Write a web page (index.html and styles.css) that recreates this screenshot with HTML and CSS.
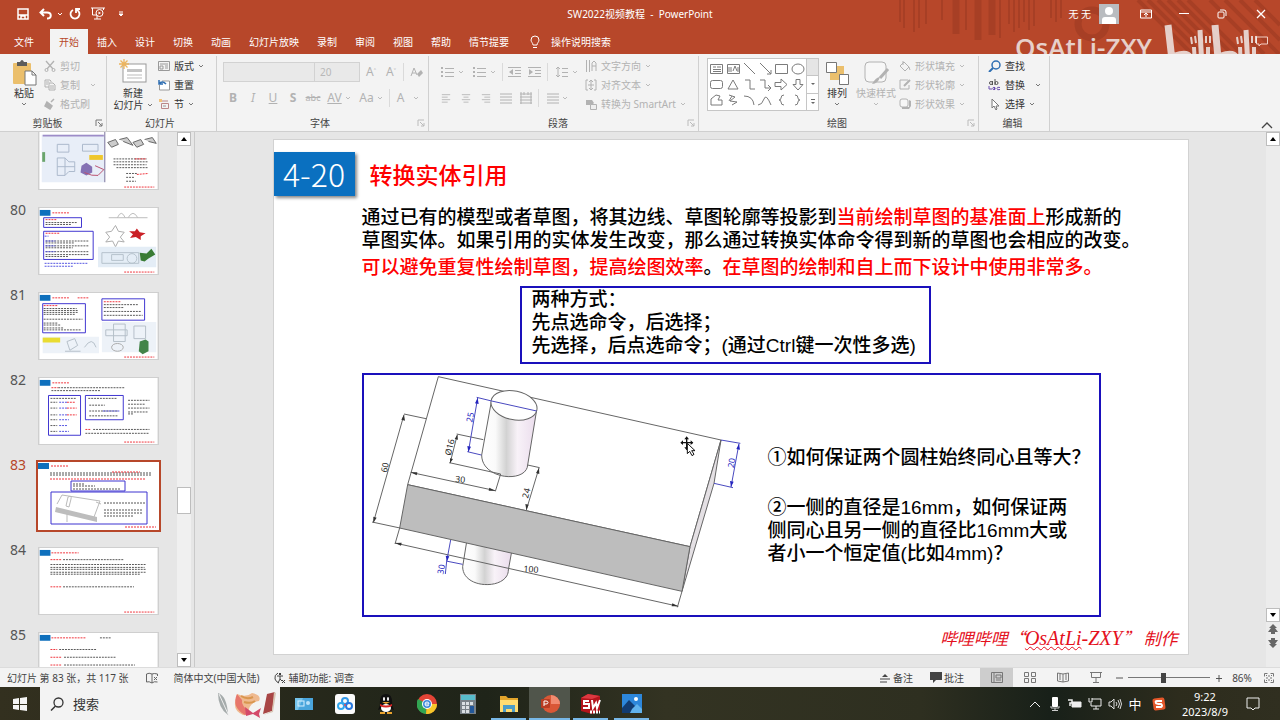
FILE: index.html
```html
<!DOCTYPE html>
<html lang="zh-CN">
<head>
<meta charset="utf-8">
<title>SW2022视频教程 - PowerPoint</title>
<link rel="stylesheet" href="styles.css">
</head>
<body>
<svg class="sprite" aria-hidden="true">
  <symbol id="chev" viewBox="0 0 6 6"><path d="M1 2l2 2 2-2" fill="none" stroke="currentColor"/></symbol>
  <symbol id="launch" viewBox="0 0 8 8"><path d="M1 7V1h6M3 3l4 4M7 4v3H4" fill="none" stroke="currentColor"/></symbol>
  <symbol id="align" viewBox="0 0 12 12"><path d="M1 2h10M1 5h7M1 8h10M1 11h7" stroke="currentColor" fill="none"/></symbol>
  <symbol id="alignc" viewBox="0 0 12 12"><path d="M1 2h10M3 5h6M1 8h10M3 11h6" stroke="currentColor" fill="none"/></symbol>
  <symbol id="alignr" viewBox="0 0 12 12"><path d="M1 2h10M4 5h7M1 8h10M4 11h7" stroke="currentColor" fill="none"/></symbol>
  <symbol id="alignj" viewBox="0 0 12 12"><path d="M0 2h12M0 5h12M0 8h12M0 11h12" stroke="currentColor" fill="none"/></symbol>
  <symbol id="list" viewBox="0 0 14 12"><path d="M0 2h2M0 6h2M0 10h2" stroke="currentColor" stroke-width="2"/><path d="M4 2.500h9M4 6.500h9M4 10.500h9" stroke="currentColor"/></symbol>
  <symbol id="indent" viewBox="0 0 14 12"><path d="M0 1.500h13M7 4.500h6M7 7.500h6M0 10.500h13" stroke="currentColor"/><path d="M5 3v6L1 6z" fill="currentColor"/></symbol>
</svg>

<header class="top">
  <svg class="pattern" viewBox="0 0 400 54" aria-hidden="true">
    <g stroke="#9f3c23" opacity=".65">
      <path d="M20 0v22M24 0v28M34 0v32M39 0v28M46 0v24" stroke-width="2"/>
      <path d="M76 0v34M98 0v40M112 0v35" stroke-width="7"/>
      <path d="M62 0v20M86 0v30M120 0v38M129 0v24M134 0v32M139 0v28M144 0v22M149 0v30M154 0v26M171 0v18M176 0v22M181 0v18" stroke-width="2"/>
      <path d="M258 0l54 54M268 0l54 54M278 0l54 54M288 0l54 54M298 0l54 54M308 0l54 54M330 0l54 54M345 0l54 54M360 0l40 40M375 0l25 25" stroke-width="4"/>
      <circle cx="212" cy="24" r="14" fill="none" stroke-width="7"/>
    </g>
  </svg>
  <div class="titlebar">
    <div class="quick">
      <button aria-label="保存"><svg width="12" height="12" viewBox="0 0 12 12"><path d="M1 1h10v10H1zM1 7h10M4 11V8h4v3" fill="none" stroke="#fff" stroke-width="1.500"/></svg></button>
      <button aria-label="撤消"><svg width="14" height="12" viewBox="0 0 14 12"><path d="M2 4.500h6c5 0 5 6 0 6M5 1L1.500 4.500 5 8" fill="none" stroke="#fff" stroke-width="2"/></svg></button>
      <svg class="chev" width="6" height="6"><use href="#chev"/></svg>
      <button aria-label="重做"><svg width="12" height="12" viewBox="0 0 12 12"><path d="M4 2a4.500 4.500 0 1 0 4 0M7 5V1h4" fill="none" stroke="#fff" stroke-width="1.800"/></svg></button>
      <button aria-label="从头开始"><svg width="14" height="13" viewBox="0 0 14 13"><path d="M0 1h14M1.500 1v7h4M12.500 1v2M6 8v4M3 12h7" fill="none" stroke="#fff"/><circle cx="8.500" cy="6" r="3.500" fill="none" stroke="#fff"/><path d="M7.500 4.500v3l2.500-1.500z" fill="#fff"/></svg></button>
      <button aria-label="自定义快速访问工具栏"><svg width="8" height="8" viewBox="0 0 8 8"><path d="M2 2h4M2 4h4L4 6z" stroke="#fff" fill="#fff"/></svg></button>
    </div>
    <h1 class="wintitle">SW2022视频教程 &nbsp;- &nbsp;PowerPoint</h1>
    <div class="account">
      <span>无 无</span>
      <svg width="20" height="20" viewBox="0 0 20 20"><path d="M0 0h20v20H0z" fill="#b9bcc0"/><circle cx="10" cy="7" r="4" fill="#fff"/><path d="M3 20v-4q0-3 3-3h8q3 0 3 3v4z" fill="#fff"/></svg>
      <button aria-label="功能区显示选项"><svg width="12" height="10" viewBox="0 0 12 10"><path d="M.5 1h11v8H.5zM.5 3h11M6 8V4M4 6l2-2 2 2" fill="none" stroke="#fff"/></svg></button>
      <button aria-label="最小化"><svg width="10" height="10" viewBox="0 0 10 10"><path d="M0 4.500h10" stroke="#fff"/></svg></button>
      <button aria-label="还原"><svg width="10" height="10" viewBox="0 0 10 10"><rect x="1" y="3" width="6" height="6" rx="1" fill="none" stroke="#fff"/><path d="M3 1h4q2 0 2 2v4" fill="none" stroke="#fff"/></svg></button>
      <button aria-label="关闭"><svg width="10" height="10" viewBox="0 0 10 10"><path d="M1 1l8 8M9 1L1 9" stroke="#fff" stroke-width="1.300"/></svg></button>
    </div>
  </div>
  <nav class="tabs">
    <button class="file">文件</button><button class="on">开始</button><button>插入</button><button>设计</button><button>切换</button><button>动画</button><button>幻灯片放映</button><button>录制</button><button>审阅</button><button>视图</button><button>帮助</button><button>情节提要</button>
    <button class="tell"><svg width="10" height="14" viewBox="0 0 10 14"><path d="M3 10C3 8 1 7 1 5a4 4 0 0 1 8 0c0 2-2 3-2 5zM3 12.500h4" fill="none" stroke="#fff"/></svg>操作说明搜索</button>
    <button class="remark" aria-label="批注"><svg width="12" height="11" viewBox="0 0 12 11"><path d="M.5 1h11v7H5L3 10V8H.5z" fill="none" stroke="#f3cfc4"/></svg></button>
  </nav>
  <div class="watermark">
    <span>OsAtLi-ZXY</span>
    <svg width="94" height="50" viewBox="0 0 94 50" fill="none" stroke="#f3f3f3" stroke-width="7"><path d="M4 1l5 44M11 32q18-6 14 8M51 1l4 44M57 32q18-6 14 8"/><path d="M36 6l2 38M82 6l2 38" stroke-width="5"/><path d="M27 13l1 7M31 12l1 7M42 12v7M46 12v7M73 13l1 7M77 12l1 7M88 12v7M92 12v7" stroke-width="2"/><path d="M30 23l1 20M44 23v20M76 23l1 20M90 23v20" stroke-width="4"/></svg>
  </div>
</header>

<section class="ribbon" aria-label="功能区">
  <div class="group g-clip">
    <div class="body">
      <button class="big"><svg width="26" height="27" viewBox="0 0 26 27"><rect x="2" y="4" width="18" height="21" rx="1" fill="#ebbf6c"/><path d="M6 3h3q2-4 4 0h3v4H6z" fill="#5c5c5c"/><path d="M14 12h7l4 4v10H14z" fill="#fff" stroke="#777"/><path d="M21 12v4h4" fill="none" stroke="#777"/></svg><span>粘贴</span><svg class="chev" width="6" height="6"><use href="#chev"/></svg></button>
      <div class="stack off">
        <button disabled><svg width="12" height="12" viewBox="0 0 12 12"><path d="M2 1l7 8M10 1L3 9" stroke="currentColor" stroke-width="1.300"/><circle cx="2.500" cy="10" r="1.500" fill="none" stroke="currentColor"/><circle cx="9.500" cy="10" r="1.500" fill="none" stroke="currentColor"/></svg>剪切</button>
        <button disabled><svg width="12" height="12" viewBox="0 0 12 12"><path d="M5 8H1V1h5l1 1v1M5 4h4l2 2v5H5zM6 7h4M6 9h4M2 3h3M2 5h2" fill="none" stroke="currentColor"/></svg>复制<svg class="chev far" width="6" height="6"><use href="#chev"/></svg></button>
        <button disabled><svg width="12" height="12" viewBox="0 0 12 12"><path d="M10 1L7 4M3 4l5 4-2 3-5-3z" fill="currentColor" stroke="currentColor" stroke-width="1.500"/></svg>格式刷</button>
      </div>
    </div>
    <div class="caption"><span>剪贴板</span><svg width="8" height="8"><use href="#launch"/></svg></div>
  </div>
  <div class="group g-slides">
    <div class="body">
      <button class="big"><svg width="28" height="27" viewBox="0 0 28 27"><rect x="4" y="5" width="23" height="18" fill="#fff" stroke="#999"/><path d="M8 10h15v3H8z" fill="#c4c4c4"/><path d="M8 16h15M8 19h15" stroke="#bbb"/><path d="M5 0v10M0 5h10M1.500 1.500l7 7M8.500 1.500l-7 7" stroke="#ecb560" stroke-width="1.300"/></svg><span>新建</span><span class="line">幻灯片<svg class="chev" width="6" height="6"><use href="#chev"/></svg></span></button>
      <div class="stack">
        <button><svg width="12" height="12" viewBox="0 0 12 12"><path d="M.5 1.500h11v9H.5zM2 4h8M2 6h3v3H2zM7 6h3M7 8h3" fill="none" stroke="#999"/></svg>版式<svg class="chev" width="6" height="6"><use href="#chev"/></svg></button>
        <button><svg width="12" height="12" viewBox="0 0 12 12"><path d="M4 2h7.500v9h-10V6" fill="#fff" stroke="#999"/><path d="M1 1v4h4M1 5q3-4 7 0" fill="none" stroke="#2f6fb3" stroke-width="1.500"/></svg>重置</button>
        <button><svg width="12" height="12" viewBox="0 0 12 12"><path d="M3 3h7M3.500 5.500h7v5h-7z" fill="none" stroke="#b88"/><path d="M1 1h3v3H1z" fill="#f1c27a"/><path d="M5 8h3" stroke="#999"/></svg>节<svg class="chev" width="6" height="6"><use href="#chev"/></svg></button>
      </div>
    </div>
    <div class="caption"><span>幻灯片</span></div>
  </div>
  <div class="group g-font off">
    <div class="rows">
      <div class="row">
        <select class="fam" aria-label="字体" disabled><option></option></select><select class="size" aria-label="字号" disabled><option>20</option></select>
        <button class="b20 glyph" disabled>A<sup>˄</sup></button><button class="b20 glyph" disabled>A<sup>˅</sup></button><i class="sep"></i>
        <button class="b20" disabled aria-label="清除格式"><svg width="13" height="13" viewBox="0 0 13 13"><path d="M1 10L4 2l3 7M2 7h4" fill="none" stroke="currentColor"/><path d="M7 8l4-4 2 3-4 4z" fill="currentColor"/></svg></button>
      </div>
      <div class="row">
        <button class="b20 glyph" disabled><b>B</b></button><button class="b20 glyph" disabled><em>I</em></button><button class="b20 glyph" disabled><u>U</u></button><button class="b20 glyph" disabled><b>S</b></button><button class="b20 mini" disabled><s>abc</s></button><button class="b32 glyph" disabled><u>AV</u><svg class="chev" width="6" height="6"><use href="#chev"/></svg></button><button class="b32 glyph" disabled>Aa<svg class="chev" width="6" height="6"><use href="#chev"/></svg></button><i class="sep"></i><button class="b32 glyph" disabled>A<svg class="chev far" width="6" height="6"><use href="#chev"/></svg></button>
      </div>
    </div>
    <div class="caption"><span>字体</span><svg width="8" height="8"><use href="#launch"/></svg></div>
  </div>
  <div class="group g-para off">
    <div class="body">
      <div class="rows">
        <div class="row">
          <button class="b32" disabled aria-label="项目符号"><svg width="14" height="12"><use href="#list"/></svg><svg class="chev" width="6" height="6"><use href="#chev"/></svg></button><button class="b32" disabled aria-label="编号"><svg width="14" height="12"><use href="#list"/></svg><svg class="chev" width="6" height="6"><use href="#chev"/></svg></button><i class="sep"></i><button class="b20" disabled aria-label="降低列表级别"><svg width="14" height="12"><use href="#indent"/></svg></button><button class="b20" disabled aria-label="提高列表级别"><svg width="14" height="12" viewBox="0 0 14 12"><path d="M0 1.500h13M7 4.500h6M7 7.500h6M0 10.500h13" stroke="currentColor"/><path d="M1 3v6l4-3z" fill="currentColor"/></svg></button><i class="sep"></i><button class="b32" disabled aria-label="行距"><svg width="14" height="12" viewBox="0 0 14 12"><path d="M3 1v10M1 3l2-2 2 2M1 9l2 2 2-2M7 2.500h6M7 6.500h6M7 10.500h6" fill="none" stroke="currentColor"/></svg><svg class="chev" width="6" height="6"><use href="#chev"/></svg></button>
        </div>
        <div class="row">
          <button class="b20" disabled aria-label="左对齐"><svg width="10" height="10"><use href="#align"/></svg></button><button class="b20" disabled aria-label="居中"><svg width="10" height="10"><use href="#alignc"/></svg></button><button class="b20" disabled aria-label="右对齐"><svg width="10" height="10"><use href="#alignr"/></svg></button><button class="b20" disabled aria-label="两端对齐"><svg width="12" height="12"><use href="#alignj"/></svg></button><button class="b20" disabled aria-label="分散对齐"><svg width="12" height="12" viewBox="0 0 12 12"><path d="M0 2h12M0 5h12M0 8h12M0 11h12M1 0v12M11 0v12M4 0v3M8 0v3" stroke="currentColor"/></svg></button><i class="sep"></i><button class="b32" disabled aria-label="分栏"><svg width="12" height="12"><use href="#alignj"/></svg><svg class="chev" width="6" height="6"><use href="#chev"/></svg></button>
        </div>
      </div>
      <div class="stack">
        <button disabled><svg width="12" height="12" viewBox="0 0 12 12"><path d="M1.500 0v12M4.500 0v12M7 11V3l2-2 2 2v8M7 6h4" fill="none" stroke="currentColor"/></svg>文字方向<svg class="chev" width="6" height="6"><use href="#chev"/></svg></button>
        <button disabled><svg width="12" height="12" viewBox="0 0 12 12"><path d="M3 1H1v10h2M9 1h2v10H9M6 1v10M4 3l2-2 2 2M4 9l2 2 2-2M3 6h6" fill="none" stroke="currentColor"/></svg>对齐文本<svg class="chev" width="6" height="6"><use href="#chev"/></svg></button>
        <button disabled><svg width="12" height="12" viewBox="0 0 12 12"><path d="M1 2h6l2 3-2 2H1z" fill="currentColor"/><path d="M5.500 6.500h6v5h-6z" fill="#eee" stroke="currentColor"/></svg>转换为 SmartArt<svg class="chev" width="6" height="6"><use href="#chev"/></svg></button>
      </div>
    </div>
    <div class="caption"><span>段落</span><svg width="8" height="8"><use href="#launch"/></svg></div>
  </div>
  <div class="group g-draw">
    <div class="body">
      <div class="gallery">
        <svg width="98" height="50" viewBox="0 0 98 50" fill="none" stroke="#7b7b7b">
          <path d="M2.500 5.500h12v9h-12zM5 8h3M9 8h4M5 10.500h8M5 12.500h8"/><path d="M19.500 5.500h12v9h-12zM21 8v5M23 8v5M25 12l2-5 2 5M30 8v5"/>
          <path d="M36 4l11 11M52 4l11 11M63 11v4h-4M67.500 5.500h12v9h-12z"/><ellipse cx="90" cy="10" rx="6" ry="5"/>
          <rect x="2.500" y="21.500" width="12" height="8" rx="2"/><path d="M25 21l5 9H20zM37 21h5v9h5M52 21h5v8h6M60 26l3 3-3 3M67 23.500h6V20l6 5.500-6 5.500v-3.500h-6zM88 20.500h4v5h3L90 31l-5-5.500h3z"/>
          <path d="M3 46v-6l5-4 4 1-2 4h4v5zM21 36l6 2-5 4 7 1-5 3M24 37l-3 5M36 37q9 0 10 9M50 46q4 0 6-6t7 6"/><path d="M76 36q-3 0-3 3 0 2-2 2 2 0 2 2 0 3 3 3M87 36q3 0 3 3 0 2 2 2-2 0-2 2 0 3-3 3"/>
        </svg>
        <div class="steps"><button disabled aria-label="上移"></button><button aria-label="下移"><svg width="6" height="4" viewBox="0 0 6 4"><path d="M1 1h4L3 3z" fill="#666"/></svg></button><button aria-label="其他"><svg width="6" height="6" viewBox="0 0 6 6"><path d="M1 .5h4" stroke="#666"/><path d="M1 3h4L3 5z" fill="#666"/></svg></button></div>
      </div>
      <button class="big"><svg width="26" height="27" viewBox="0 0 26 27"><path d="M10 7h10v10H10zM6 12h10v9H6z" fill="#ebbf6c"/><path d="M2.500 3.500h10v10h-10zM15.500 15.500h9v10h-9z" fill="#fff" stroke="#777"/></svg><span>排列</span><svg class="chev" width="6" height="6"><use href="#chev"/></svg></button>
      <button class="big off" disabled><svg width="28" height="27" viewBox="0 0 28 27"><rect x="3" y="3" width="21" height="20" rx="4" fill="#f7f7f7" stroke="currentColor"/><path d="M26 10l-8 9" stroke="currentColor" stroke-width="3"/><path d="M18 18q-2 7-8 7 4-7 8-7z" fill="currentColor"/></svg><span>快速样式</span><svg class="chev" width="6" height="6"><use href="#chev"/></svg></button>
      <div class="stack off">
        <button disabled><svg width="12" height="12" viewBox="0 0 12 12"><path d="M5 2l5 5-4 4-5-5zM4 1v4M10 7l1 3" fill="none" stroke="currentColor"/></svg>形状填充<svg class="chev" width="6" height="6"><use href="#chev"/></svg></button>
        <button disabled><svg width="12" height="12" viewBox="0 0 12 12"><path d="M9 1H1v9h9V6" fill="none" stroke="currentColor"/><path d="M11 1L5 7" stroke="currentColor" stroke-width="2"/></svg>形状轮廓<svg class="chev" width="6" height="6"><use href="#chev"/></svg></button>
        <button disabled><svg width="12" height="12" viewBox="0 0 12 12"><path d="M3 11h7l2-3V3l-2-1v7H3z" fill="currentColor"/><rect x="1" y="1" width="8" height="8" rx="2" fill="#f7f7f7" stroke="currentColor"/></svg>形状效果<svg class="chev" width="6" height="6"><use href="#chev"/></svg></button>
      </div>
    </div>
    <div class="caption"><span>绘图</span><svg class="dim" width="8" height="8"><use href="#launch"/></svg></div>
  </div>
  <div class="group g-edit">
    <div class="body">
      <div class="stack">
        <button><svg width="13" height="12" viewBox="0 0 13 12"><circle cx="8" cy="5" r="4" fill="none" stroke="#2f6fb3" stroke-width="1.500"/><path d="M5 8l-4 4" stroke="#2f6fb3" stroke-width="2"/></svg>查找</button>
        <button><svg width="13" height="12" viewBox="0 0 13 12"><g fill="none" stroke="#555"><circle cx="3" cy="4" r="1.500"/><path d="M4.500 2v4M7 0v6"/><circle cx="8.500" cy="4" r="1.500"/></g><g fill="none" stroke="#6a4fb0"><path d="M1 7v3h3M6.500 8v3"/><circle cx="6" cy="9.500" r="1.200"/><path d="M12 8.500q-3-1-3 1t3 1"/></g></svg>替换<svg class="chev far" width="6" height="6"><use href="#chev"/></svg></button>
        <button><svg width="13" height="12" viewBox="0 0 13 12"><path d="M4 1v9l2-2 2 4 1-1-1-3h3z" fill="#fff" stroke="#777"/></svg>选择<svg class="chev" width="6" height="6"><use href="#chev"/></svg></button>
      </div>
    </div>
    <div class="caption"><span>编辑</span></div>
  </div>
  <button class="collapse" aria-label="折叠功能区"><svg width="12" height="8" viewBox="0 0 12 8"><path d="M1 7l5-5 5 5" fill="none" stroke="#444" stroke-width="1.300"/></svg></button>
</section>

<main class="work">
  <aside class="panel" aria-label="幻灯片缩略图">
    <ol class="thumbs">
      <li><span></span><svg viewBox="0 0 121 68"><path d="M0 0h121v68H0z" fill="#fff"/><path d="M2 12h65v49H2z" fill="#e8eef8"/><path d="M3 13h63" stroke="#9d8cc8" stroke-width="2"/><path d="M67 8v53" stroke="#76709a"/><path d="M4 30v10" stroke="#6aa56c" stroke-width="3"/><path d="M18 36h8l4 4h6v10h-6l-4 4h-8zM18 22h12v8H18zM44 22h16v7H44zM18 45h18M26 36v18" fill="none" stroke="#aab8cb"/><path d="M51 33h14v5H51z" fill="#efc72c"/><path d="M43 44l5-3 6 4v6l-6 3-6-3z" fill="#8471b4"/><path d="M46 51q8 4 14 3l6-6-9-4" fill="none" stroke="#b9506e"/><path d="M70 20l8-3 3 5-7 3zM82 17l8-2 6 8-10-4M96 20l8-3 3 5-7 3zM108 17l8-2 4 6-8-2" fill="#ccc" stroke="#666"/><g class="t"><path d="M76 37h34M76 40h35M76 43h34M79 46h32M89 52h11M89 56h8M89 60h10"/><path class="r" d="M98 37h12M100 53l12-1M87 66h31"/></g></svg></li>
      <li><span>80</span><svg viewBox="0 0 121 68"><path d="M0 0h121v68H0z" fill="#fff"/><path class="tag" d="M0 2h11v6H0z"/><path class="box" d="M4 10h39v10H4zM4 24h51v29H4z"/><g class="t"><path d="M6 15h33M6 17h26M6 34h44M6 36h30M6 39h44M6 41h28M6 45h44M6 48h44M6 50h24"/><path class="r" d="M13 5h18M6 12h12M6 26h14M87 66h31"/><path class="bl" d="M5 29h4M5 57h44M5 60h30M6 34h10M6 39h10M6 45h10"/></g><path d="M71 10h40M80 10q4-9 8 0M91 10q5-9 10 0" fill="none" stroke="#bbb"/><path d="M78 18l3 6 6 1-4 5 4 5-6-1-3 6-3-6-7 1 4-5-4-5 6-1z" fill="none" stroke="#aaa"/><path d="M100 21l3 4 6 1-5 3 0 4-5-3-6 1 3-4-4-3 6 0z" fill="#ca2026"/><path d="M60 40h60v21H60z" fill="#e4edf6"/><path d="M64 46h38v11H64zM74 48h12v6H74z" fill="none" stroke="#b5c1cb"/><circle cx="95" cy="52" r="5" fill="none" stroke="#b5c1cb"/><path d="M103 46l7 1 5-5 4 6-7 4-4 3-4-1z" fill="#397c35"/></svg></li>
      <li><span>81</span><svg viewBox="0 0 121 68"><path d="M0 0h121v68H0z" fill="#fff"/><path class="tag" d="M0 2h11v6H0z"/><path class="box" d="M3 11h44v30H3zM64 6h44v22H64z"/><g class="t"><path d="M4 16h34M4 18h35M4 20h36M4 22h32M4 27h40M4 31h14M4 33h18M4 36h20M4 38h38M66 12h36M66 15h20M66 19h38M66 23h40"/><path class="r" d="M13 5h18M39 5h12M4 13h14M66 9h18M87 66h31"/></g><path d="M3 45h58v17H3zM64 30h56v31H64z" fill="#edf2f8"/><path d="M3 46h18v5H3z" fill="#e9dc32"/><path d="M28 50l8-3 3 7-8 5zM46 56q8-12 12 0M26 60h16M68 38h22v6H68zM76 32h12v18H76zM97 34h12v13H97z" fill="none" stroke="#b5bfc8"/><ellipse cx="80" cy="56" rx="6" ry="4" fill="none" stroke="#aaa"/><path d="M103 50l6-2 3 2v10l-6 3-4-3z" fill="#438449"/></svg></li>
      <li><span>82</span><svg viewBox="0 0 121 68"><path d="M0 0h121v68H0z" fill="#fff"/><path class="tag" d="M0 2h11v6H0z"/><path class="box" d="M9 18h33v41H9zM47 18h39v25H47z"/><g class="t"><path d="M19 10h68M12 13h50M11 21h27M11 25h7M11 31h7M11 38h7M11 43h7M11 49h7M11 55h7M50 21h30M51 28h16M51 34h30M51 39h30M91 23h22M91 27h18M91 31h22M91 35h20M91 37h6M55 53h58M47 57h66"/><path class="r" d="M12 10h7M13 5h18M28 25h8M28 31h10M28 38h10M47 53h6M87 66h31"/><path class="bl" d="M20 25h8M20 31h8M20 38h8M20 43h10M20 49h8M20 55h10M65 34h18"/></g></svg></li>
      <li class="current"><span>83</span><svg viewBox="0 0 121 68"><path d="M0 0h121v68H0z" fill="#fff"/><path class="tag" d="M0 1h11v6H0z"/><path class="box" d="M33 19h54v10H33zM13 30h96v32H13z"/><g class="t"><path d="M12 11h101M12 13h101M35 22h12M35 24h22M35 27h48M66 41h41M66 48h39M66 51h38M66 54h30"/><path class="r" d="M13 4h18M74 10h28M12 17h96M87 65h31"/></g><path d="M18 45l41 10v5L17 50z" fill="#bdbdbd"/><path d="M19 42l5-9 38 6-6 16M30 35q4-2 3 2l-2 8-3-1zM29 52v8M58 40l5 2" fill="none" stroke="#bbb"/></svg></li>
      <li><span>84</span><svg viewBox="0 0 121 68"><path d="M0 0h121v68H0z" fill="#fff"/><path class="tag" d="M0 2h11v6H0z"/><g class="t"><path d="M24 12h63M11 17h98M11 20h97M11 22h98M11 25h99M11 27h92M24 40h73"/><path class="r" d="M12 5h28M11 12h11M11 40h11M87 66h31"/></g></svg></li>
      <li><span>85</span><svg viewBox="0 0 121 68"><path d="M0 0h121v68H0z" fill="#fff"/><path class="tag" d="M0 2h11v6H0z"/><g class="t"><path d="M62 5h12M20 17h39M25 25h53M25 33h73"/><path class="r" d="M12 5h36M11 17h7M11 25h12M11 33h12"/></g></svg></li>
    </ol>
    <div class="scroll">
      <button aria-label="向上滚动"><svg width="8" height="6" viewBox="0 0 8 6"><path d="M1 5l3-4 3 4z"/></svg></button>
      <div class="knob"></div>
      <button aria-label="向下滚动"><svg width="8" height="6" viewBox="0 0 8 6"><path d="M1 1l3 4 3-4z"/></svg></button>
    </div>
  </aside>
  <section class="stage">
    <article class="slide">
      <div class="heading"><span class="badge">4-20</span><h2>转换实体引用</h2></div>
      <div class="copy">
        <p>通过已有的模型或者草图，将其边线、草图轮廓等投影到<span class="hot">当前绘制草图的基准面上</span>形成新的<br>草图实体。如果引用的实体发生改变，那么通过转换实体命令得到新的草图也会相应的改变。</p>
        <p><span class="hot">可以避免重复性绘制草图，提高绘图效率</span>。<span class="hot">在草图的绘制和自上而下设计中使用非常多。</span></p>
      </div>
      <div class="ways">两种方式：<br>先点选命令，后选择；<br>先选择，后点选命令；(通过Ctrl键一次性多选)</div>
      <div class="example">
        <svg width="390" height="240" viewBox="12 15 1170 720" fill="none" stroke="#666" stroke-width="3">
          <defs><linearGradient id="cyl"><stop offset="0" stop-color="#fff"/><stop offset=".25" stop-color="#fafafa"/><stop offset=".45" stop-color="#d2d2d2"/><stop offset=".65" stop-color="#f8f2f8"/><stop offset="1" stop-color="#eadcec"/></linearGradient></defs>
          <path d="M235 20L1083 210 990 530 143 344z"/>
          <path d="M1083 210L990 530 966 664 1062 340z" fill="#e4e0e4"/>
          <path d="M320 515L308 590C308 660 445 660 445 600L455 545z" fill="url(#cyl)"/>
          <path d="M143 344L990 530 966 664 119 474z" fill="#bdbdbd"/>
          <path d="M394 95L365 255C365 330 500 340 503 285L530 120z" fill="url(#cyl)"/>
          <ellipse cx="462" cy="106" rx="70" ry="43" transform="rotate(12 462 106)" fill="#fff"/>
          <path d="M132 132l66 14M132 134L40 458M36 456l84 18M119 474l-14 48M105 519l850 190M966 664l-14 48M152 307l254 55M422 312l-16 52M290 192l80 17M292 194l-22 86M268 278l154 34M503 285l36 8M537 294l-38 126"/>
          <path d="M350 82l45 11 135 30M353 84l-28 162M322 245l42 10M1083 210l58 10M1137 221l-24 130M1062 340l57 13M272 510l-12 64M258 573l50 10M260 574l-4 38" stroke="#4a4ac0"/>
          <g fill="#333" stroke="none"><path d="M132 134l3 18-11-3zM40 458l0-18 10 3zM105 519l20-1-2 9zM955 709l-20 0 2-9zM152 307l20 0-2 9zM406 362l-20 0 2-9zM292 194l2 15-10-2zM270 280l0-15 9 2zM537 294l1 18-10-3zM499 420l-3-18 10 2z"/></g>
          <g fill="#2525bf" stroke="none"><path d="M353 84l3 18-11-2zM325 246l-3-18 11 2zM1137 221l3 18-11-2zM1113 351l-3-18 11 2zM261 574l-4-17 11 2z"/></g>
          <g class="dims"><text transform="translate(80 309) rotate(-76)">60</text><text transform="translate(272 258) rotate(-76)">Ø16</text><text class="blue" transform="translate(337 158) rotate(-80)">25</text><text transform="translate(504 386) rotate(-76)">24</text><text transform="translate(285 336) rotate(5)">30</text><text transform="translate(490 605) rotate(5)">100</text><text class="blue" transform="translate(1121 295) rotate(-80)">20</text><text class="blue" transform="translate(250 614) rotate(-80)">30</text></g>
          <g stroke="#111"><path d="M980 204v34M964 218h34" stroke-width="4"/><path d="M980 199l-7 9h14zM980 241l-7-9h14zM961 218l8-7v14zM1000 218l-8-7v14z" fill="#111" stroke="none"/><path d="M982 220v31l7-7 7 13 6-4-7-11h10z" fill="#fff"/></g>
        </svg>
        <div class="quiz"><p>①如何保证两个圆柱始终同心且等大？</p><p>②一侧的直径是16mm，如何保证两<br>侧同心且另一侧的直径比16mm大或<br>者小一个恒定值(比如4mm)？</p></div>
      </div>
      <footer class="credit">哔哩哔哩“<span class="name"><u>OsAtLi</u>-ZXY</span>” 制作</footer>
    </article>
  </section>
  <div class="scroll right">
    <button aria-label="向上滚动"><svg width="8" height="6" viewBox="0 0 8 6"><path d="M1 5l3-4 3 4z"/></svg></button>
    <button class="down" aria-label="向下滚动"><svg width="8" height="6" viewBox="0 0 8 6"><path d="M1 1l3 4 3-4z"/></svg></button>
    <button class="bare" aria-label="上一张幻灯片"><svg width="10" height="10" viewBox="0 0 10 10" fill="#666"><path d="M5 0l4 4H7l3 4H7v2H3V8H0l3-4H1z"/></svg></button>
    <button class="bare" aria-label="下一张幻灯片"><svg width="10" height="10" viewBox="0 0 10 10" fill="#666"><path d="M3 0h4v2h3L7 6h2l-4 4-4-4h2L0 2h3z"/></svg></button>
  </div>
</main>

<footer class="status">
  <span>幻灯片 第 83 张，共 117 张</span>
  <button class="proof" aria-label="校对"><svg width="12" height="12" viewBox="0 0 12 12"><path d="M6 2v9M6 2Q3 .5.500 2v8Q3 9 6 11q2-2 5.500-1M6 2q2-1 5.500 0v2M8 5l3 3M11 5L8 8" fill="none" stroke="#666"/></svg></button>
  <button>简体中文(中国大陆)</button>
  <button class="access"><svg width="12" height="12" viewBox="0 0 12 12"><path d="M4 1Q0 3 1 7q1 3 4 4M3 4h6M6 4v3l-2 4M6 7l2 2M8 8l3 3M11 8l-3 3" fill="none" stroke="#444"/><circle cx="6" cy="2" r="1"/></svg>辅助功能: 调查</button>
  <div class="right-tools">
    <button class="note"><svg width="10" height="10" viewBox="0 0 10 10"><path d="M5 1l3 3H2z" fill="#444"/><path d="M0 6h10M0 9h7" stroke="#444"/></svg>备注</button>
    <button class="cmt"><svg width="12" height="11" viewBox="0 0 12 11"><path d="M0 0h12v8H6l-3 3V8H0z" fill="#444"/></svg>批注</button>
    <button class="view on" aria-label="普通视图"><svg width="12" height="11" viewBox="0 0 12 11"><path d="M.5.500h11v10H.5zM3 .5v10M5 3h5v3H5zM5 8h5" fill="none" stroke="#777"/></svg></button>
    <button class="view" aria-label="幻灯片浏览"><svg width="12" height="11" viewBox="0 0 12 11"><path d="M.5.500h4v4h-4zM7.500.500h4v4h-4zM.5 6.500h4v4h-4zM7.500 6.500h4v4h-4z" fill="none" stroke="#777"/></svg></button>
    <button class="view" aria-label="阅读视图"><svg width="12" height="11" viewBox="0 0 12 11"><path d="M6 2v8M6 2L.5 1v8L6 10l5.500-1V1zM2 3h2M2 5h2M2 7h2M8 3h2M8 5h2M8 7h2" fill="none" stroke="#777"/></svg></button>
    <button class="view" aria-label="幻灯片放映"><svg width="12" height="11" viewBox="0 0 12 11"><path d="M0 .5h12M1.500.500v5h9v-5M6 5.500v5M3 10.500h6" fill="none" stroke="#777"/></svg></button>
    <button class="pm" aria-label="缩小"><svg width="8" height="8" viewBox="0 0 8 8"><path d="M1 4h7" stroke="#555"/></svg></button>
    <input type="range" min="0" max="100" value="43" aria-label="缩放">
    <button class="pm" aria-label="放大"><svg width="8" height="8" viewBox="0 0 8 8"><path d="M1 4.500h6M4 1v7" stroke="#555"/></svg></button>
    <button class="pct">86%</button>
    <button class="fit" aria-label="适应窗口"><svg width="10" height="10" viewBox="0 0 10 10"><path d="M.5.500h3M6.500.500h3v3M9.500 6.500v3h-3M3.500 9.500h-3v-3M.5 3.500v-3M3 3l-1-1M7 3l1-1M3 7L2 8M7 7l1 1M5 2v2M5 6v2M2 5h2M6 5h2" fill="none" stroke="#777"/></svg></button>
  </div>
</footer>

<footer class="taskbar">
  <button class="start" aria-label="开始"><svg width="14" height="14" viewBox="0 0 14 14" fill="#f4f4f4"><path d="M0 2l6-1v6H0zM7 1l7-1v7H7zM0 8h6v5l-6-1zM7 8h7v6l-7-1z"/></svg></button>
  <label class="search"><svg width="14" height="14" viewBox="0 0 14 14"><circle cx="8.500" cy="5.500" r="4.500" fill="none" stroke="#333" stroke-width="1.300"/><path d="M5.500 9L1 13.500" stroke="#333" stroke-width="1.500"/></svg><input type="text" placeholder="搜索" aria-label="搜索"><svg width="60" height="28" viewBox="0 0 60 28"><path d="M1 3q9 3 10 22Q1 18 1 3z" fill="#a5abab"/><path d="M2 4l10 22" stroke="#eee"/><path d="M20 4q9 4 15-1 10 2 7 8-8 1-10 8 0 7-6 6-9-4-8-12z" fill="#efb98f"/><path d="M20 4q-6 13 8 21l4-3q-8-7-7-12z" fill="#e7776c"/><path d="M24 6q6 4 12 1M27 12q7 2 11-1" stroke="#d9964f" fill="none" stroke-width="2"/><path d="M28 17l8 6 8-5-2 6 1 4-7-4-7 2z" fill="#d4496a"/><path d="M50 4l8-2-3 19-9 3z" fill="#a84545"/><path d="M57 2l2 1-3 19-10 3 9-4z" fill="#d8c6b4"/></svg></label>
  <nav class="apps" aria-label="任务栏">
    <button aria-label="远程"><svg width="18" height="14" viewBox="0 0 18 14"><path d="M0 1h18v12H0z" fill="#4aa5dc"/><path d="M0 1h8L3 13H0z" fill="#74c3eb"/><rect x="3" y="4" width="6" height="5" fill="none" stroke="#d6efff"/><circle cx="13" cy="6" r="2" fill="#b9e1fa"/></svg></button>
    <button aria-label="网盘"><svg width="20" height="20" viewBox="0 0 20 20"><rect width="20" height="20" rx="3" fill="#fbfbfb"/><g fill="none" stroke-width="2"><circle cx="10" cy="7" r="3" stroke="#3399e8"/><circle cx="6" cy="12" r="3" stroke="#31a8ed"/><circle cx="14" cy="12" r="3" stroke="#2878df"/></g><circle cx="10" cy="11" r="1" fill="#e64a58"/></svg></button>
    <button aria-label="QQ"><svg width="18" height="20" viewBox="0 0 18 20"><path d="M3 11Q2 0 9 0t6 11l2 5-3-1q-5 7-10 0l-3 1z" fill="#101010"/><ellipse cx="9" cy="14" rx="5" ry="4" fill="#fff"/><ellipse cx="7" cy="5" rx="1" ry="2" fill="#fff"/><ellipse cx="11" cy="5" rx="1" ry="2" fill="#fff"/><path d="M5 8h8l-4 2z" fill="#eca42e"/><path d="M3 10q6 3 12 0v2q-6 3-12 0z" fill="#d62222"/><path d="M3 19h5M10 19h5" stroke="#eca42e" stroke-width="2"/></svg></button>
    <button aria-label="浏览器"><svg width="20" height="20" viewBox="0 0 20 20"><circle cx="10" cy="10" r="10" fill="#e44436"/><path d="M10 10L1 5a10 10 0 0 0 8 15z" fill="#31a552"/><path d="M10 10h10a10 10 0 0 1-11 10z" fill="#f7c72a"/><circle cx="10" cy="10" r="5" fill="#fff"/><circle cx="10" cy="10" r="4" fill="#428bdb"/><path d="M8 10h4q0-2-2-2t-2 2 2 2l2-1" stroke="#fff" fill="none"/></svg></button>
    <button aria-label="计算器"><svg width="16" height="20" viewBox="0 0 16 20"><path d="M0 0h16v20H0z" fill="#788188"/><path d="M1 1h14v5H1z" fill="#58bccc"/><path d="M2 8h3v3H2zM6 8h3v3H6zM10 8h3v3h-3zM2 12h3v3H2zM6 12h3v3H6zM2 16h3v3H2zM6 16h3v3H6z" fill="#d9dfe4"/><path d="M10 12h4v7h-4z" fill="#23589a"/></svg></button>
    <button class="run" aria-label="文件资源管理器"><svg width="20" height="18" viewBox="0 0 20 18"><path d="M1 1h6l2 2h10v5H1z" fill="#e3a52c"/><path d="M1 5h18v12H1z" fill="#ffdc72"/><path d="M4 10h12v7h-3v-3H7v3H4z" fill="#4b9cc8"/></svg></button>
    <button class="run live" aria-label="PowerPoint"><svg width="20" height="18" viewBox="0 0 20 18"><circle cx="11" cy="9" r="9" fill="#d95736"/><path d="M11 0a9 9 0 0 1 9 9h-9z" fill="#f18b70"/><rect x="1" y="4" width="9" height="9" rx="1" fill="#b93c22"/><path d="M4 11V6h2q2 0 2 1.500T6 9H4" fill="none" stroke="#fff"/></svg></button>
    <button class="run" aria-label="SOLIDWORKS 2022"><svg width="20" height="20" viewBox="0 0 20 20"><path d="M0 4l7-4 12 2v15l-8 3L0 17z" fill="#b3141b"/><path d="M0 4l7-4 12 2-8 3z" fill="#dc3941"/><path d="M8 7H3v3h5v4H2M11 6l1 8 3-5 1 5 3-8" fill="none" stroke="#fff" stroke-width="2"/><path d="M9 18h10" stroke="#fff" stroke-width="3" stroke-dasharray="2 1"/></svg></button>
    <button class="run" aria-label="照片"><svg width="20" height="19" viewBox="0 0 20 19"><path d="M0 0h20v19H0z" fill="#2d87db"/><path d="M0 14l7-8 13 13H0z" fill="#123c72"/><path d="M10 15l5-5 5 5v4H8z" fill="#61b3ee"/><circle cx="14" cy="5" r="2" fill="#fff"/></svg></button>
  </nav>
  <div class="tray">
    <button aria-label="显示隐藏的图标"><svg width="12" height="8" viewBox="0 0 12 8"><path d="M1 7l5-5 5 5" fill="none" stroke="#eee"/></svg></button>
    <button aria-label="麦克风"><svg width="10" height="14" viewBox="0 0 10 14"><rect x="2" y="0" width="6" height="10" rx="1" fill="#fff"/><path d="M1 9v2h8V9M5 11v3M2 13.500h6" stroke="#ccc" fill="none"/></svg></button>
    <button aria-label="电池"><svg width="14" height="10" viewBox="0 0 14 10"><path d="M4 3h9v5H4z" fill="#eee" stroke="#eee"/><path d="M0 1h4v3H2v3" stroke="#eee" fill="none" stroke-width="1.500"/></svg></button>
    <button aria-label="网络"><svg width="14" height="12" viewBox="0 0 14 12"><path d="M4 1h9v7H3V5M8 8v3M5 11h6M1 0v4h3V0" fill="none" stroke="#eee"/></svg></button>
    <button aria-label="音量"><svg width="14" height="12" viewBox="0 0 14 12"><path d="M1 4h2l3-3v10L3 8H1zM8 4q2 2 0 4M10 2q3 4 0 8M12 1q3 5 0 10" fill="none" stroke="#ddd"/></svg></button>
    <button class="ime">中</button>
    <button aria-label="输入法"><svg width="14" height="14" viewBox="0 0 14 14"><rect x="1" y="1" width="12" height="12" rx="2" fill="#e4572a" transform="rotate(-8 7 7)"/><path d="M10 4H5q-2 0-1 2 0 1 5 1 2 2 0 3H4" fill="none" stroke="#fff" stroke-width="2"/></svg></button>
    <button class="clock">9:22<br>2023/8/9</button>
    <button aria-label="通知"><svg width="14" height="14" viewBox="0 0 14 14"><path d="M1 1h12v10h-4l-2 2-2-2H1z" fill="none" stroke="#eee"/></svg></button>
  </div>
</footer>
</body>
</html>
```
FILE: styles.css
```css
* { box-sizing: border-box; }
body {
  margin: 0; min-height: 100vh; display: flex; flex-direction: column;
  font: 10px/14px "Noto Sans", "Noto Sans CJK SC", sans-serif; color: #333; background: #e6e6e6;
}
button, input, select { font: inherit; color: inherit; }
button { border: 0; padding: 0; background: none; display: flex; align-items: center; justify-content: center; white-space: nowrap; }
svg { flex: none; display: block; }
h1, h2, p, ol { margin: 0; padding: 0; }
h1 { font-weight: 400; }
.sprite { position: absolute; width: 0; height: 0; }

/* Title bar and tabs */
.top { position: relative; background: #b7472a; color: #fff; }
.pattern { position: absolute; right: 0; top: 0; width: 400px; height: 54px; }
.titlebar { position: relative; height: 27px; display: grid; grid-template-columns: 1fr auto 1fr; align-items: center; }
.quick { display: flex; align-items: center; gap: 7px; padding-left: 15px; }
.quick button { width: 16px; height: 20px; }
.quick .chev { margin-left: -4px; margin-right: -3px; }
.wintitle { font-size: 10px; }
.account { display: flex; align-items: center; justify-content: flex-end; gap: 12px; padding-right: 11px; }
.account button { width: 26px; height: 20px; }
.account span { margin-right: -4px; }
.account svg + button { margin-left: 2px; }
.account button:last-child { width: 16px; margin-left: 6px; }
.tabs { position: relative; height: 27px; display: flex; }
.tabs button { padding: 0 9px; height: 25px; margin-top: 2px; }
.tabs .file { padding: 0 16px 0 14px; }
.tabs .on { background: #f3f3f3; color: #b7472a; }
.tabs .tell { margin-left: 3px; gap: 11px; }
.tabs .remark { margin-left: auto; padding-right: 12px; }
.watermark { position: absolute; right: 22px; top: 24px; bottom: 0; overflow: hidden; display: flex; gap: 12px; opacity: .8; color: #f3f3f3; font: 600 26px/46px "Open Sans", sans-serif; pointer-events: none; }

/* Ribbon */
.ribbon { display: flex; background: #f3f3f3; border-bottom: 1px solid #cfcfcf; padding-top: 2px; }
.group { display: flex; flex-direction: column; border-right: 1px solid #d0d0d0; }
.body { display: flex; height: 58px; }
.caption { display: flex; height: 17px; align-items: center; padding-right: 3px; }
.caption span { flex: 1; text-align: center; color: #444; }
.caption svg { color: #777; }
.off .caption svg, .caption .dim { color: #bbb; }
.off { color: #b2b2b2; }
.off button { color: inherit; }
.off .caption span { color: #444; }
.big { flex-direction: column; justify-content: flex-start; line-height: 12px; }
.big > svg:first-child { margin: 3px 0 1px; }
.big .chev { margin-top: 2px; }
.big .line { display: flex; align-items: center; gap: 3px; }
.big .line .chev { margin: 0; }
.stack { display: flex; flex-direction: column; }
.stack button { height: 19px; gap: 4px; justify-content: flex-start; }
.ribbon .chev { color: #777; }
.ribbon .off .chev, .ribbon .off.big .chev { color: #bbb; }
.far { margin-left: 6px; }
.g-clip { width: 107px; }
.g-clip .big { width: 48px; }
.g-clip .stack { margin-left: -4px; }
.g-slides { width: 110px; }
.g-slides .big { width: 52px; }
.g-slides .stack { margin-left: -1px; }
.g-font { width: 212px; padding-left: 6px; }
.rows { display: flex; flex-direction: column; gap: 6px; padding-top: 6px; height: 58px; }
.row { display: flex; height: 20px; align-items: center; }
.b20 { width: 20px; height: 20px; }
.b32 { width: 32px; height: 20px; gap: 3px; }
.sep { width: 1px; height: 18px; margin: 0 2px; background: #dadada; }
.glyph { font-size: 12px; }
.glyph sup { font-size: 8px; line-height: 8px; }
.mini { font-size: 9px; }
select { appearance: none; height: 20px; border: 1px solid #d2d2d2; background: #e9e9e9; color: #b8b8b8; opacity: 1; border-radius: 0; }
.fam { width: 92px; }
.size { width: 45px; padding: 0 5px; margin-right: 1px; border-left: 0; }
.g-para { width: 270px; }
.g-para .rows { width: 154px; padding-left: 7px; }
.g-para .stack { padding-left: 2px; }
.g-draw { width: 280px; padding-left: 8px; }
.gallery { display: flex; width: 112px; height: 53px; margin-top: 2px; background: #fff; border: 1px solid #c6c6c6; }
.steps { flex: 1; display: flex; flex-direction: column; border-left: 1px solid #c6c6c6; }
.steps button { flex: 1; border-bottom: 1px solid #c6c6c6; }
.steps button:disabled { background: #e5e5e5; }
.steps button:last-child { border: 0; }
.g-draw .big { width: 38px; margin-left: -1px; }
.g-draw .big.off { width: 42px; margin-left: -1px; }
.g-draw .stack { width: 78px; margin-left: 2px; }
.g-edit { width: 71px; padding-left: 9px; }
.g-edit .caption { margin-left: -9px; }
.collapse { margin: auto 7px 2px auto; }

/* Work area */
.work { flex: 1; display: flex; height: 535px; min-height: 0; }
.panel { flex: none; width: 195px; display: flex; justify-content: space-between; padding-right: 3px; border-right: 1px solid #c9c9c9; overflow: hidden; height: 535px; }
.thumbs { list-style: none; margin-top: -10px; display: flex; flex-direction: column; gap: 17px; }
.thumbs li { display: flex; height: 68px; flex: none; }
.thumbs span { width: 38px; padding-left: 10px; font-size: 14px; line-height: 16px; margin-top: -5px; color: #555; }
.thumbs li > svg { width: 121px; height: 68px; border: 1px solid #cfcfcf; }
.thumbs .current > svg { border: 0; outline: 2px solid #b7472a; outline-offset: 0; }
.thumbs .current span { color: #b7472a; }
.tag { fill: #0f70bd; }
.box { fill: #fff; stroke: #3c32d0; }
.t path { fill: none; stroke: #555; stroke-dasharray: 2 1; }
.t .r { stroke: #f03038; }
.t .bl { stroke: #5050e0; }
.scroll { width: 14px; display: flex; flex-direction: column; justify-content: space-between; background: #f0f0f0; }
.scroll button { height: 14px; flex: none; background: #fff; border: 1px solid #bdbdbd; }
.knob { height: 27px; background: #fff; border: 1px solid #bdbdbd; margin-top: 341px; margin-bottom: auto; }
.scroll.right { flex: none; height: auto; background: #ececec; justify-content: flex-start; padding-bottom: 17px; }
.scroll .down { margin-top: auto; }
.scroll .bare { background: none; border: 0; }
.stage { flex: 1; min-width: 0; padding-top: 7px; }

/* Slide */
.slide { width: 916px; max-width: 100%; min-height: 516px; margin: 0 auto; padding-top: 12px; background: #fff; border: 1px solid #d2d2d2; color: #000; font: 500 19px/23px "Liberation Sans", "Noto Sans CJK SC", sans-serif; }
.heading { display: flex; align-items: center; gap: 15px; height: 44px; }
.badge { width: 81px; height: 44px; background: #0a70c0; color: #fff; text-align: center; font: 300 32px/42px "Noto Sans CJK SC", sans-serif; box-shadow: 2px 2px 3px #888; }
.heading h2 { padding-top: 4px; font-size: 23px; font-weight: 500; color: #f00; }
.copy { margin: 10px 0 0 88px; white-space: nowrap; }
.copy p + p { margin-top: 4px; }
.hot { color: #f00; }
.ways { width: 411px; margin: 7px 0 0 246px; padding: 0 10px 5px; border: 2px solid #1a10bc; white-space: nowrap; }
.example { display: flex; width: 739px; margin: 9px 0 0 88px; border: 2px solid #1a10bc; }
.quiz { margin: 71px 0 0 14px; white-space: nowrap; }
.quiz p + p { margin-top: 27px; }
.dims text { font: 26px "Noto Sans", sans-serif; fill: #222; stroke: none; }
.dims .blue { fill: #2525bf; }
.credit { margin: 9px 10px 0; text-align: right; color: #e4101c; font: italic 17px/24px "Noto Sans CJK SC", sans-serif; }
.name { font: italic 20px/24px "Liberation Serif", serif; }
.name u { text-decoration: underline wavy #e4101c 1px; }

/* Status bar */
.status { display: flex; align-items: center; height: 20px; padding-left: 7px; background: #f3f3f3; border-top: 1px solid #dcdcdc; color: #444; white-space: nowrap; }
.proof { margin: 0 16px 0 17px; }
.access { margin-left: 14px; gap: 3px; }
.right-tools { margin-left: auto; display: flex; align-items: center; height: 19px; }
.note { gap: 3px; margin-right: 17px; }
.cmt { gap: 2px; margin-right: 16px; }
.view { width: 33px; height: 19px; }
.view.on { background: #cdcdcd; }
.pm { width: 14px; }
.pct { width: 32px; }
.fit { width: 22px; }
input[type="range"] { appearance: none; width: 82px; height: 12px; margin: 0 2px; background: linear-gradient(#777, #777) center / 100% 1px no-repeat; }
input[type="range"]::-webkit-slider-thumb { appearance: none; width: 5px; height: 10px; background: #444; }

/* Taskbar */
.taskbar { display: flex; height: 33px; background: linear-gradient(90deg, #33301f, #1f2419 38%, #333322 52%, #2e2f20 72%, #182019 82%, #2d2c1d 92%, #302f20); color: #fff; }
.start { width: 40px; }
.search { width: 240px; display: flex; align-items: center; padding: 0 3px 0 10px; background: #f3f3f3; }
.search input { flex: 1; min-width: 0; border: 0; padding: 0 9px; background: none; font-size: 13px; outline: 0; }
.search input::placeholder { color: #333; opacity: 1; }
.apps { display: flex; padding-left: 3px; }
.apps button { width: 41px; height: 33px; }
.apps .run { background: linear-gradient(#78b8e8, #78b8e8) bottom / 35px 2px no-repeat; }
.apps .live { background: linear-gradient(#78b8e8, #78b8e8) bottom / 100% 2px no-repeat #50554b; }
.tray { margin-left: auto; display: flex; align-items: center; padding-right: 11px; }
.tray button { width: 20px; height: 33px; }
.tray .ime { font-size: 13px; }
.tray button:nth-child(7) { width: 28px; }
.tray .clock { width: 64px; font-size: 11px; line-height: 15px; }
.tray button:last-child { width: 32px; }
```
